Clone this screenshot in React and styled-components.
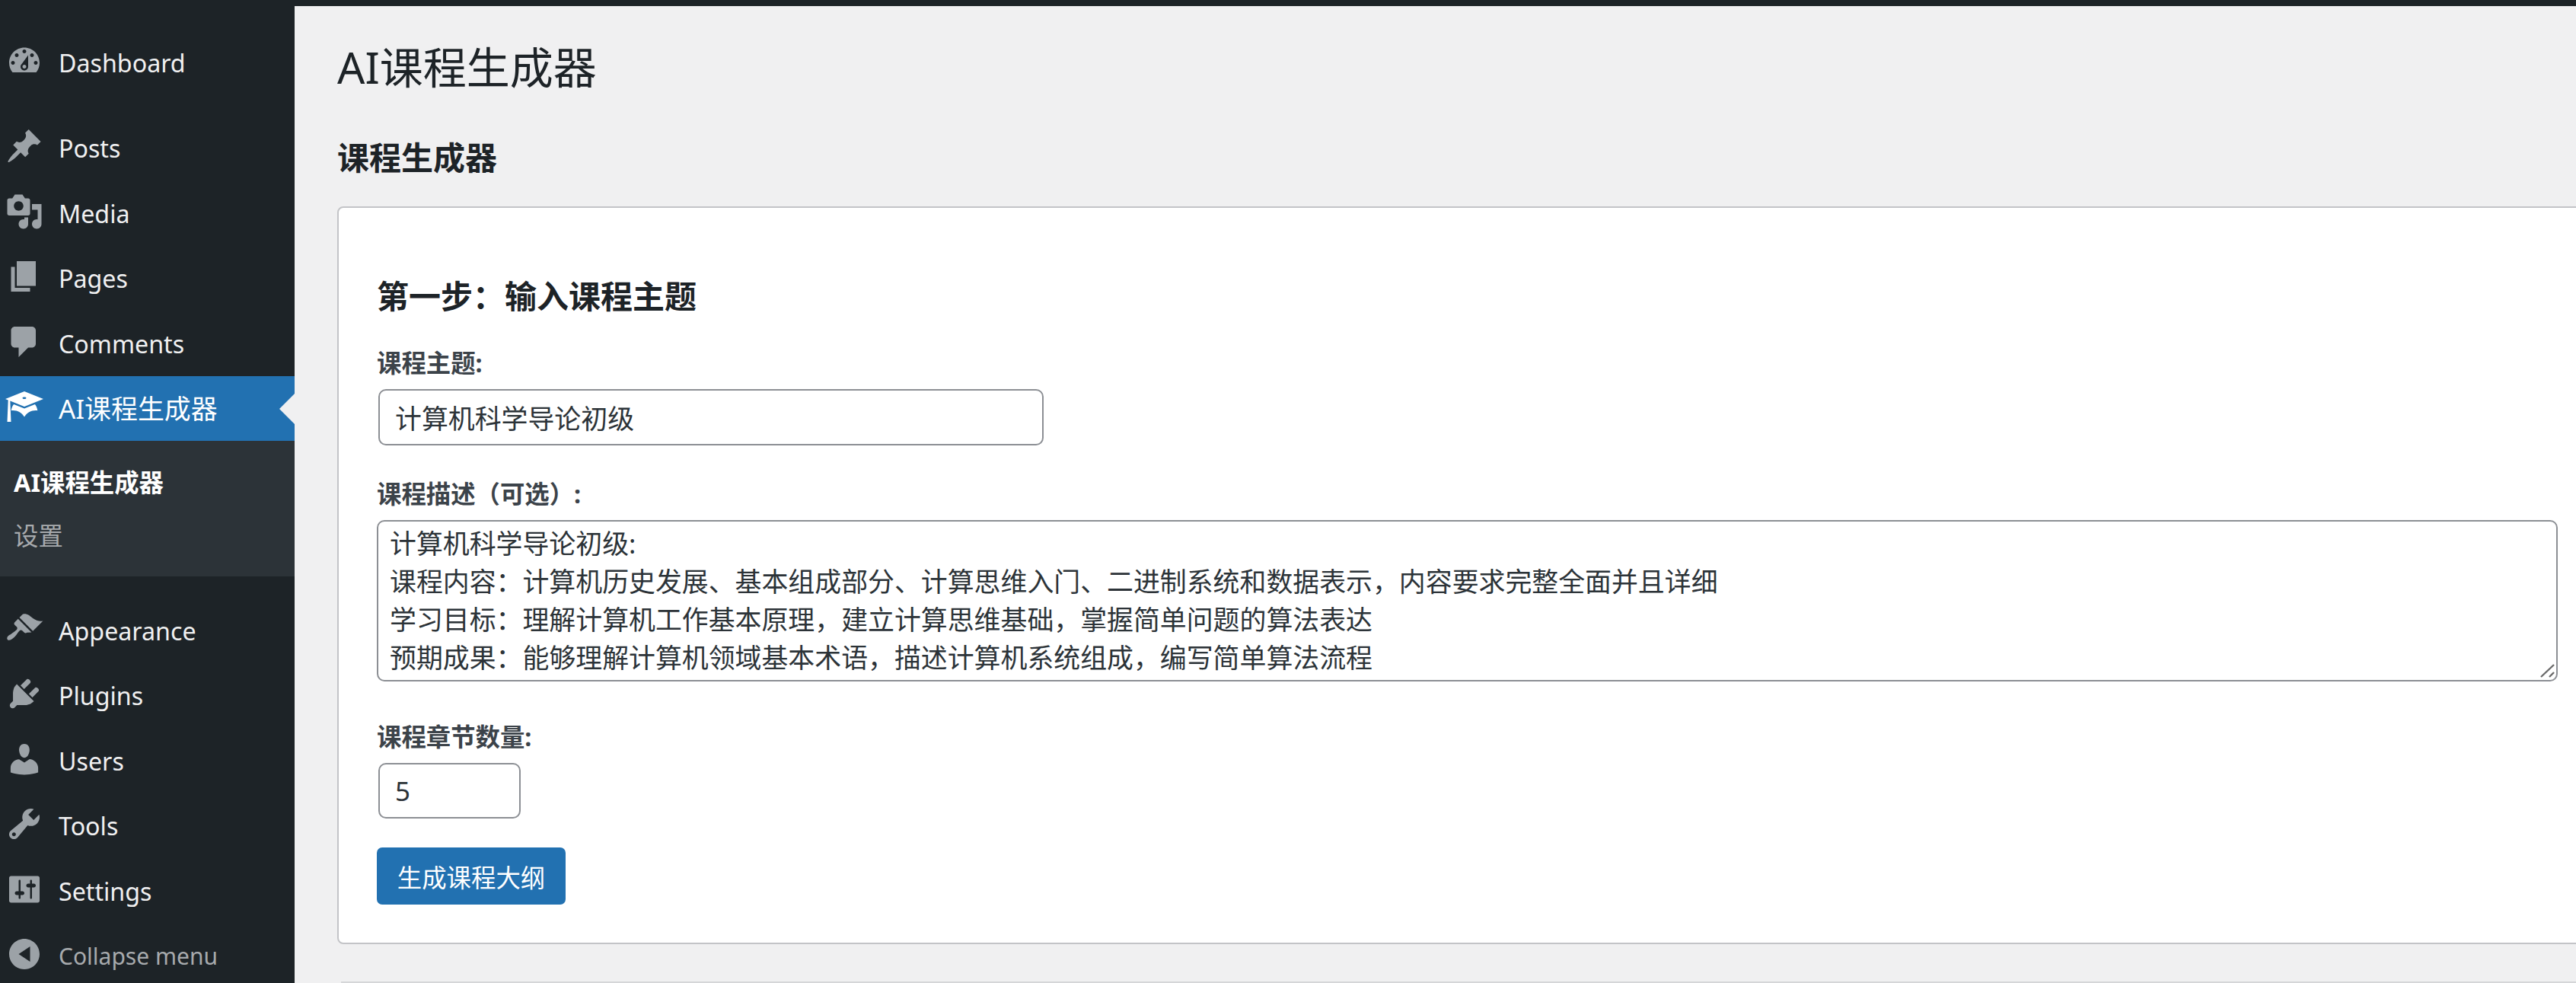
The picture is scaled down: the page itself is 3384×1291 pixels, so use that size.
import React from 'react';
import styled, { createGlobalStyle } from 'styled-components';

const GlobalStyle = createGlobalStyle`
  html, body {
    margin: 0;
    height: 1291px;
    overflow: hidden;
    background: #f0f0f1;
  }
  body, input, textarea, button {
    font-family: "Noto Sans", "Noto Sans CJK SC", sans-serif;
  }
`;

const Page = styled.div`
  display: flex;
  flex-direction: column;
  height: 1291px;
  overflow: hidden;
`;
const TopBar = styled.div`
  height: 8px;
  flex: none;
  background: #1d2327;
`;
const Body = styled.div`
  display: flex;
  flex: 1;
  min-height: 0;
`;

/* sidebar */
const Sidebar = styled.nav`
  width: 387px;
  flex: none;
  padding-top: 31px;
  background: #1d2327;
  overflow: hidden;
`;
const MenuRow = styled.div`
  position: relative;
  display: flex;
  align-items: center;
  gap: 20px;
  height: 85.5px;
  padding-left: 7px;
  margin-top: ${p => (p.$sep || 0)}px;
  background: ${p => (p.$active ? '#2271b1' : 'transparent')};
  color: ${p => (p.$active ? '#fff' : p.$muted ? '#a7aaad' : '#f0f0f1')};
  svg { fill: ${p => (p.$active ? '#fff' : '#9ca2a7')}; }
  ${p => p.$active && `
    &::after {
      content: '';
      position: absolute;
      right: 0;
      top: 23px;
      border: 20px solid transparent;
      border-left: 0;
      border-right-color: #f0f0f1;
    }
  `}
`;
const Icon = styled.svg`
  width: 50px;
  height: 50px;
  flex: none;
  margin-top: -4px;
`;
const MenuLabel = styled.span`
  font-size: ${p => p.$size}px;
  line-height: 1;
  padding-top: 2px;
`;
const SubMenu = styled.div`
  padding: 19px 0;
  background: #2c3338;
`;
const SubItem = styled.div`
  height: 70px;
  line-height: 70px;
  padding-left: 18px;
  font-size: 32.4px;
  font-weight: ${p => (p.$current ? 700 : 400)};
  color: ${p => (p.$current ? '#fff' : '#a7aaad')};
`;

/* content */
const Main = styled.main`
  flex: 1;
  min-width: 0;
  padding: 44px 0 0 56px;
  overflow: hidden;
  color: #1d2327;
`;
const Title = styled.h1`
  margin: 0;
  font-size: 57px;
  font-weight: 400;
  line-height: 72px;
`;
const SectionTitle = styled.h2`
  margin: 55px 0 0;
  font-size: 42px;
  font-weight: 700;
  line-height: 56px;
`;
const Card = styled.section`
  box-sizing: border-box;
  width: 2969px;
  margin-top: 36px;
  padding: 88px 50px 50px;
  background: #fff;
  border: 2px solid #c3c4c7;
  border-radius: 8px;
`;
const StepTitle = styled.h3`
  margin: 0;
  font-size: 42px;
  font-weight: 700;
  line-height: 56px;
`;
const Label = styled.label`
  display: block;
  margin-top: ${p => p.$top}px;
  font-size: 32.4px;
  font-weight: 700;
  line-height: 42px;
  color: #3c434a;
`;
const TextInput = styled.input`
  display: block;
  box-sizing: border-box;
  width: ${p => p.$width}px;
  height: ${p => p.$height}px;
  margin: 14px 0 0 2px;
  padding: 0 20px;
  background: #fff;
  border: 2.5px solid #8c8f94;
  border-radius: 10px;
  font-size: 34.9px;
  color: #2c3338;
  outline: none;
`;
const AreaWrap = styled.div`
  position: relative;
  margin-top: 14px;
`;
const TextArea = styled.textarea`
  display: block;
  box-sizing: border-box;
  width: 100%;
  height: 212px;
  padding: 4px 15px;
  background: #fff;
  border: 2.5px solid #8c8f94;
  border-radius: 10px;
  font-size: 34.9px;
  line-height: 50px;
  color: #2c3338;
  resize: none;
  overflow: hidden;
  outline: none;
`;
const Grip = styled.svg`
  position: absolute;
  right: 3px;
  bottom: 4px;
  width: 20px;
  height: 20px;
`;
const PrimaryButton = styled.button`
  display: block;
  width: 248px;
  height: 75px;
  margin-top: 38px;
  padding: 0;
  background: #2271b1;
  border: 0;
  border-radius: 7px;
  color: #fff;
  font-size: 32.4px;
`;
const FooterLine = styled.div`
  width: 2964px;
  height: 2px;
  margin: 49px 0 0 5px;
  background: #d5d6d8;
`;

const icons = {
  dashboard: 'M3.76 16h12.48c1.1-1.37 1.76-3.11 1.76-5 0-4.42-3.58-8-8-8s-8 3.58-8 8c0 1.89.66 3.63 1.76 5zM10 4c.55 0 1 .45 1 1s-.45 1-1 1-1-.45-1-1 .45-1 1-1zM6 6c.55 0 1 .45 1 1s-.45 1-1 1-1-.45-1-1 .45-1 1-1zm8 0c.55 0 1 .45 1 1s-.45 1-1 1-1-.45-1-1 .45-1 1-1zm-5.37 5.55L12 7v6c0 1.1-.9 2-2 2s-2-.9-2-2c0-.57.24-1.08.63-1.45zM4 10c.55 0 1 .45 1 1s-.45 1-1 1-1-.45-1-1 .45-1 1-1zm12 0c.55 0 1 .45 1 1s-.45 1-1 1-1-.45-1-1 .45-1 1-1zm-5 3c0-.55-.45-1-1-1s-1 .45-1 1 .45 1 1 1 1-.45 1-1z',
  posts: 'M10.44 3.02l1.82-1.82 6.36 6.35-1.83 1.82c-1.05-.68-2.48-.57-3.41.36l-.75.75c-.92.93-1.04 2.35-.35 3.41l-1.83 1.82-2.41-2.41-2.8 2.79c-.42.42-3.38 2.71-3.8 2.29s1.86-3.39 2.28-3.81l2.79-2.79L4.1 9.36l1.83-1.82c1.05.69 2.48.57 3.4-.36l.75-.75c.93-.92 1.05-2.35.36-3.41z',
  media: 'M13 11V4c0-.55-.45-1-1-1h-1.67L9 1H5L3.67 3H2c-.55 0-1 .45-1 1v7c0 .55.45 1 1 1h10c.55 0 1-.45 1-1zM7 4.5c1.38 0 2.5 1.12 2.5 2.5S8.38 9.5 7 9.5 4.500 8.38 4.500 7 5.620 4.500 7 4.500zM14 6h5v10.5c0 1.38-1.12 2.500-2.500 2.500S14 17.880 14 16.500s1.120-2.500 2.500-2.500c.17 0 .34.02.5.05V9h-3V6zm-4 8.05V13h2v3.500c0 1.380-1.120 2.500-2.500 2.500S7 17.880 7 16.500 8.120 14 9.500 14c.17 0 .34.02.5.05z',
  pages: 'M6 15V2h10v13H6zm-1 1h8v2H3V5h2v11z',
  comments: 'M5 2h9c1.1 0 2 .9 2 2v7c0 1.1-.9 2-2 2h-2l-5 5v-5H5c-1.1 0-2-.9-2-2V4c0-1.1.9-2 2-2z',
  learn: 'M10 10L2.54 7.02 3 18H1l.48-11.41L0 6l10-4 10 4zm0-5c-.55 0-1 .22-1 .5s.45.5 1 .5 1-.22 1-.5-.45-.5-1-.5zm0 6l5.57-2.23c.71.94 1.2 2.07 1.36 3.3-.3-.04-.61-.07-.93-.07-2.55 0-4.78 1.37-6 3.41C8.78 13.37 6.55 12 4 12c-.32 0-.63.03-.93.07.16-1.23.65-2.36 1.36-3.3z',
  appearance: 'M14.48 11.06L7.41 3.99l1.5-1.5c.5-.56 2.3-.47 3.51.32 1.21.8 1.43 1.28 2.91 2.1 1.18.64 2.45 1.26 4.45.85zm-.71.71L6.7 4.7 4.93 6.47c-.39.39-.39 1.02 0 1.41l1.06 1.06c.39.39.39 1.03 0 1.42-.6.6-1.43 1.11-2.21 1.69-.35.26-.7.53-1.01.84C1.43 13.23.4 14.85 1.2 15.65c.8.8 2.42-.23 3.76-1.57.31-.31.58-.66.85-1.02.57-.78 1.08-1.6 1.69-2.21.39-.39 1.02-.39 1.41 0l1.06 1.06c.39.39 1.02.39 1.41 0z',
  plugins: 'M13.11 4.36L9.87 7.6 8 5.73l3.24-3.24c.35-.34 1.05-.2 1.56.32.52.51.66 1.21.31 1.55zm-8 1.77l.91-1.12 9.01 9.01-1.19.84c-.71.71-2.63 1.16-3.82 1.16H6.14L4.9 17.26c-.59.59-1.54.59-2.12 0-.59-.58-.59-1.53 0-2.12l1.24-1.24v-3.88c0-1.13.4-3.19 1.09-3.89zm7.26 3.97l3.24-3.24c.34-.35 1.04-.21 1.55.31.52.51.66 1.21.31 1.55l-3.24 3.25z',
  users: 'M10 9.25c-2.27 0-2.73-3.44-2.73-3.44C7 4.02 7.82 2 9.97 2c2.16 0 2.98 2.02 2.71 3.81 0 0-.41 3.44-2.68 3.44zm0 2.57L12.72 10c2.39 0 4.52 2.33 4.52 4.53v2.49s-3.65 1.13-7.24 1.13c-3.65 0-7.24-1.13-7.24-1.13v-2.49c0-2.25 1.94-4.48 4.47-4.48z',
  tools: 'M16.68 9.77c-1.34 1.34-3.3 1.67-4.95.99l-5.41 6.52c-.99.99-2.59.99-3.58 0s-.99-2.59 0-3.57l6.52-5.42c-.68-1.65-.35-3.61.99-4.95 1.28-1.28 3.12-1.62 4.72-1.06l-2.89 2.89 2.82 2.82 2.86-2.87c.53 1.58.18 3.39-1.08 4.65zM3.81 16.21c.4.39 1.04.39 1.43 0 .4-.4.4-1.04 0-1.43-.39-.4-1.03-.4-1.43 0-.39.39-.39 1.03 0 1.43z',
  settings: 'M18 16V4c0-.55-.45-1-1-1H3c-.55 0-1 .45-1 1v12c0 .55.45 1 1 1h14c.55 0 1-.45 1-1zM8 11h1c.55 0 1 .45 1 1s-.45 1-1 1H8v1.5c0 .28-.22.5-.5.5s-.5-.22-.5-.5V13H6c-.55 0-1-.45-1-1s.45-1 1-1h1V5.5c0-.28.22-.5.5-.5s.5.22.5.5V11zm5-2h-1c-.55 0-1-.45-1-1s.45-1 1-1h1V5.5c0-.28.22-.5.5-.5s.5.22.5.5V7h1c.55 0 1 .45 1 1s-.45 1-1 1h-1v5.500c0 .28-.22.5-.5.5s-.5-.22-.5-.5V9z',
  collapse: 'M18 10c0-4.42-3.58-8-8-8s-8 3.58-8 8 3.58 8 8 8 8-3.58 8-8zm-5-4v8l-6-4z',
};

const DashIcon = ({ name }) => (
  <Icon viewBox="0 0 20 20">
    <path fillRule="evenodd" d={icons[name]} />
  </Icon>
);

const Item = ({ icon, label, size = 32.2, ...rest }) => (
  <MenuRow {...rest}>
    <DashIcon name={icon} />
    <MenuLabel $size={size}>{label}</MenuLabel>
  </MenuRow>
);

// full-width punctuation, written as escapes so it stays full-width
const COLON = '\uFF1A';
const COMMA = '\uFF0C';

const description = [
  '计算机科学导论初级:',
  `课程内容${COLON}计算机历史发展、基本组成部分、计算思维入门、二进制系统和数据表示${COMMA}内容要求完整全面并且详细`,
  `学习目标${COLON}理解计算机工作基本原理${COMMA}建立计算思维基础${COMMA}掌握简单问题的算法表达`,
  `预期成果${COLON}能够理解计算机领域基本术语${COMMA}描述计算机系统组成${COMMA}编写简单算法流程`,
].join('\n');

const App = () => (
  <Page>
    <GlobalStyle />
    <TopBar />
    <Body>
      <Sidebar>
        <Item icon="dashboard" label="Dashboard" />
        <Item icon="posts" label="Posts" $sep={27} />
        <Item icon="media" label="Media" />
        <Item icon="pages" label="Pages" />
        <Item icon="comments" label="Comments" />
        <Item icon="learn" label="AI课程生成器" size={34.9} $active />
        <SubMenu>
          <SubItem $current>AI课程生成器</SubItem>
          <SubItem>设置</SubItem>
        </SubMenu>
        <Item icon="appearance" label="Appearance" $sep={28} />
        <Item icon="plugins" label="Plugins" />
        <Item icon="users" label="Users" />
        <Item icon="tools" label="Tools" />
        <Item icon="settings" label="Settings" />
        <Item icon="collapse" label="Collapse menu" size={30} $muted />
      </Sidebar>
      <Main>
        <Title>AI课程生成器</Title>
        <SectionTitle>课程生成器</SectionTitle>
        <Card>
          <StepTitle>{`第一步${COLON}输入课程主题`}</StepTitle>
          <Label $top={38}>课程主题:</Label>
          <TextInput $width={874} $height={74} defaultValue="计算机科学导论初级" />
          <Label $top={42}>{'课程描述\uFF08可选\uFF09:'}</Label>
          <AreaWrap>
            <TextArea defaultValue={description} />
            <Grip viewBox="0 0 20 20">
              <path d="M1 18L18 2M12 18L18 12" stroke="#6a6a6a" strokeWidth="2.4" fill="none" />
            </Grip>
          </AreaWrap>
          <Label $top={51}>课程章节数量:</Label>
          <TextInput type="number" $width={187} $height={73} defaultValue="5" />
          <PrimaryButton>生成课程大纲</PrimaryButton>
        </Card>
        <FooterLine />
      </Main>
    </Body>
  </Page>
);

export default App;
